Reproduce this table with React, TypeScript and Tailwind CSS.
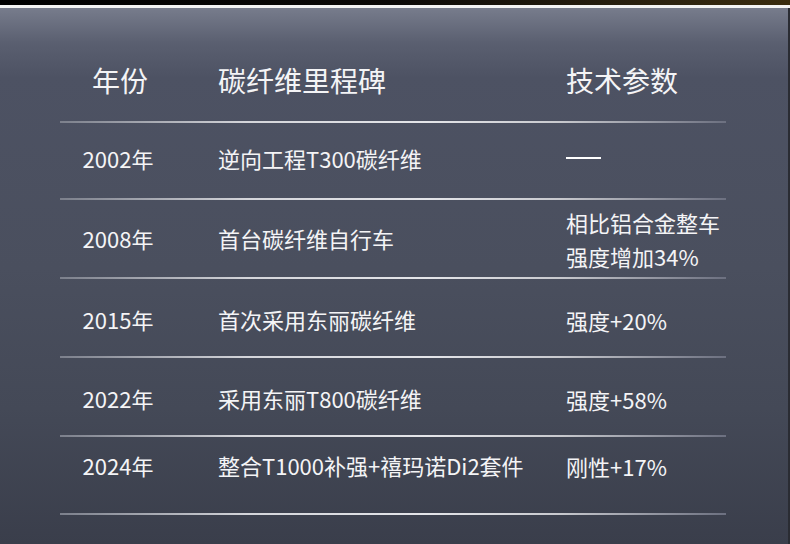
const rows = [
  { year: "2002年", milestone: "逆向工程T300碳纤维", spec: null, h: "h-[75px]", pad: "pb-[5px]" },
  { year: "2008年", milestone: "首台碳纤维自行车", spec: ["相比铝合金整车", "强度增加34%"], h: "h-[77px]", pad: "" },
  { year: "2015年", milestone: "首次采用东丽碳纤维", spec: ["强度+20%"], h: "h-[77px]", pad: "pt-[4px]" },
  { year: "2022年", milestone: "采用东丽T800碳纤维", spec: ["强度+58%"], h: "h-[77px]", pad: "pt-[4px]" },
  { year: "2024年", milestone: "整合T1000补强+禧玛诺Di2套件", spec: ["刚性+17%"], h: "h-[76px]", pad: "pb-[19px]" },
];

const Divider = () => (
  <div className="mx-[60px] h-[2px] w-[666px] bg-[linear-gradient(to_right,#7c808c,#d4d5da_28%,#e4e5e9_55%,#c8c9ce_75%,#6c7080)] shadow-[0_6px_14px_rgba(255,255,255,0.06)]" />
);

export default function App() {
  return (
    <div className="w-[790px] h-[544px] overflow-hidden bg-black font-['Noto_Sans_CJK_SC','Noto_Sans',sans-serif] text-[#f4f4f6]">
      <div className="h-[5px] bg-[linear-gradient(to_right,#000000,#0c0a08_50%,#2e2410_85%,#3a2c0e)]" />
      <div className="h-[3px] bg-[#f4f4f4]" />
      <div className="flex h-[536px]">
        <div className="flex-1 bg-[linear-gradient(to_bottom,#777c8c_0px,#5a5f70_35px,#4d5263_70px,#4a4f5e_260px,#444957_400px,#3a3e4b_536px)]">
          <div className="flex h-[113px] items-center pt-[30px] text-[28px]">
            <div className="w-[240px] text-center">年份</div>
            <div className="ml-[-22px] w-[348px]">碳纤维里程碑</div>
            <div>技术参数</div>
          </div>
          {rows.map((r) => (
            <div key={r.year}>
              <Divider />
              <div className={`flex items-center text-[22px] ${r.h} ${r.pad}`}>
                <div className="w-[236px] text-center">{r.year}</div>
                <div className="ml-[-18px] w-[348px]">{r.milestone}</div>
                <div className="leading-[34px]">
                  {r.spec ? r.spec.map((s) => <div key={s}>{s}</div>) : <div className="h-[2px] w-[35px] bg-white" />}
                </div>
              </div>
            </div>
          ))}
          <Divider />
        </div>
        <div className="w-[2px] bg-[#2a2c33]" />
      </div>
    </div>
  );
}
